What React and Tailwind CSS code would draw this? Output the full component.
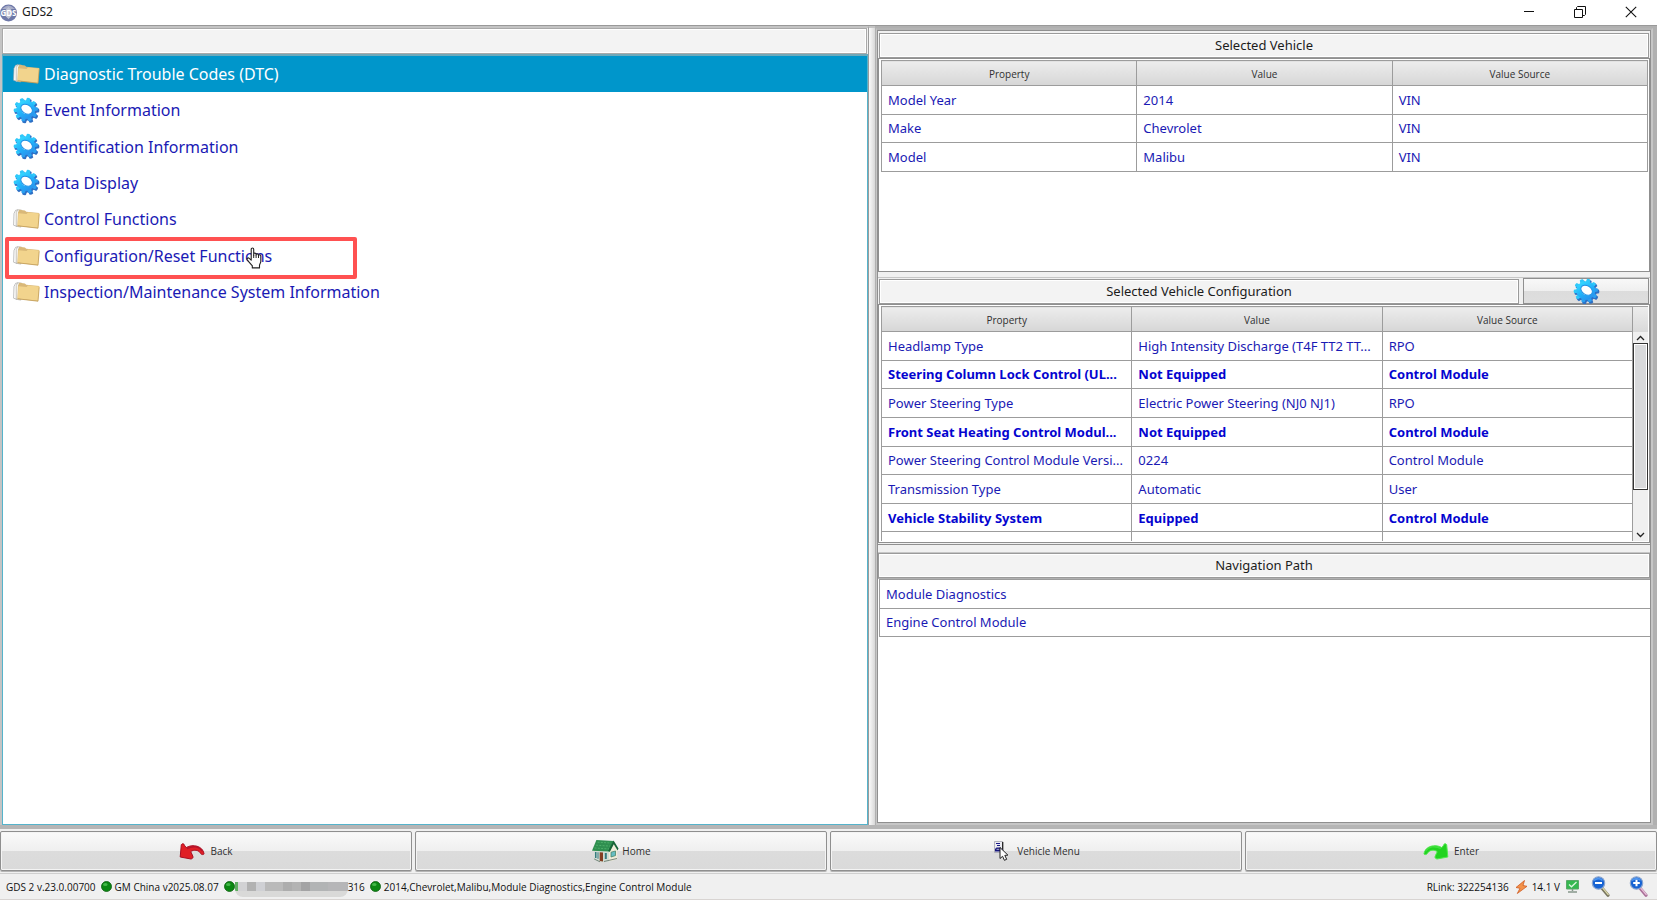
import React from "react";

const menuItems = [
  { label: "Diagnostic Trouble Codes (DTC)", icon: "folder", selected: true },
  { label: "Event Information", icon: "gear" },
  { label: "Identification Information", icon: "gear" },
  { label: "Data Display", icon: "gear" },
  { label: "Control Functions", icon: "folder" },
  { label: "Configuration/Reset Functions", icon: "folder", marked: true },
  { label: "Inspection/Maintenance System Information", icon: "folder" },
];

const vehicleRows = [
  ["Model Year", "2014", "VIN"],
  ["Make", "Chevrolet", "VIN"],
  ["Model", "Malibu", "VIN"],
];

const configRows = [
  ["Headlamp Type", "High Intensity Discharge (T4F TT2 TT...", "RPO"],
  ["Steering Column Lock Control (UL...", "Not Equipped", "Control Module", true],
  ["Power Steering Type", "Electric Power Steering (NJ0 NJ1)", "RPO"],
  ["Front Seat Heating Control Modul...", "Not Equipped", "Control Module", true],
  ["Power Steering Control Module Versi...", "0224", "Control Module"],
  ["Transmission Type", "Automatic", "User"],
  ["Vehicle Stability System", "Equipped", "Control Module", true],
  ["", "", ""],
];

const navigationPath = ["Module Diagnostics", "Engine Control Module"];

const toothAngles = [0, 36, 72, 108, 144, 180, 216, 252, 288, 324];

function Gear() {
  return (
    <svg viewBox="0 0 27 27" className="h-[27px] w-[27px] shrink-0" aria-hidden="true">
      <defs>
        <linearGradient id="gearFace" x1="0" y1="0" x2="1" y2="1">
          <stop offset="0" stopColor="#35d6ff" />
          <stop offset="0.55" stopColor="#20b0fa" />
          <stop offset="1" stopColor="#2a90ec" />
        </linearGradient>
      </defs>
      <g transform="translate(13.9 14.1) rotate(14) scale(0.96 0.94)" fill="#2d6fc4">
        {toothAngles.map((a) => (
          <path key={a} d="M-2.5 -8 L-2 -12.6 Q0 -13.5 2 -12.6 L2.5 -8Z" transform={`rotate(${a})`} />
        ))}
        <circle r="8" fill="none" stroke="#2d6fc4" strokeWidth="4" />
      </g>
      <g transform="translate(12.8 12.6) rotate(14) scale(0.96 0.94)" fill="url(#gearFace)">
        {toothAngles.map((a) => (
          <path key={a} d="M-2.3 -8 L-1.8 -12.3 Q0 -13.2 1.8 -12.3 L2.3 -8Z" fill={a > 180 || a < 60 ? "#2fc8fa" : "#2a9ff0"} transform={`rotate(${a})`} />
        ))}
        <circle r="7.2" fill="none" stroke="url(#gearFace)" strokeWidth="5.4" />
      </g>
      <ellipse cx="13.6" cy="12.2" rx="6.2" ry="4.4" transform="rotate(32 13.6 12.2)" fill="#fff" stroke="#1f8fe4" strokeWidth=".9" />
    </svg>
  );
}

function Folder() {
  return (
    <svg viewBox="0 0 27 20" className="h-[20px] w-[27px] shrink-0" aria-hidden="true">
      <path d="M1 4.5 2.6 1.3 5 .8 4 17.5.6 16.2Z" fill="#fff" stroke="#a8a8a8" strokeWidth=".7" />
      <path d="M3.2 3.6 4.6.8l4 .3-.8 17-4.6-.9Z" fill="#f7f7f5" stroke="#a39f94" strokeWidth=".6" />
      <path d="M5 3.4 6.3.7l5.6.7 1.4 1.4 13 1.2-.4 1.9L24.9 19.3 4.4 17Z" fill="#d9b878" />
      <path d="M5.4 4.2 13.6 5l1.3-1.5 11.4 1-1.2 14.2L4.7 16.6Z" fill="#f2d48d" />
      <path d="M4.6 16.8 25 19.2l1.2-14" fill="none" stroke="#c29c55" strokeWidth=".8" />
    </svg>
  );
}

function HandCursor() {
  return (
    <svg viewBox="0 0 17 22" className="h-[22px] w-[17px]" aria-hidden="true">
      <path
        d="M5.2 13.2V2.3c0-1.8 2.5-1.8 2.5 0v6 -1.1c0-1.4 2.4-1.4 2.4.1v1 -.4c0-1.4 2.4-1.3 2.4.1v1 -.3c0-1.3 2.3-1.2 2.3.3v5.5c0 1.5-1.3 2.6-1.3 4v2.4H6.3v-2.2C5 17.2 2.8 14.8 1.3 12.8c-.9-1.3.8-2.5 1.9-1.5Z"
        fill="#fff"
        stroke="#222"
        strokeWidth="1.1"
        strokeLinejoin="round"
      />
      <path d="M7.7 8v3M10.1 8.300v2.700M12.500 8.800v2.200" stroke="#222" strokeWidth="1" />
    </svg>
  );
}

function Arrow({ enter }) {
  const fill = enter ? "#22d321" : "#e01f26";
  const edge = enter ? "#53ea50" : "#a80f22";
  return (
    <svg viewBox="0 0 26 17" className="h-[17px] w-[26px] shrink-0" aria-hidden="true">
      <g transform={enter ? "translate(26 0) scale(-1 1)" : undefined}>
        <path
          d="M1.200 14 2.300 1.700C3 .300 5.200.500 5.400 2.200L7.200 4.600C14 .500 23.500 3.200 25 10.400c.2 1.500-2.400 1.600-3.300.2-1.700-3-4.600-4.200-8.900-2.700l-1 .9 2 4.300c.7 1.600-.3 2.600-1.800 2.900Z"
          fill={fill}
          stroke={edge}
          strokeWidth="1"
          strokeLinejoin="round"
        />
        <path d="M8 5.600C14 2.300 20.500 3.500 23.400 8" fill="none" stroke={enter ? "#41e03e" : "#b5132b"} strokeWidth="1.500" />
      </g>
    </svg>
  );
}

function House() {
  return (
    <svg viewBox="0 0 28 24" className="h-[24px] w-[28px] shrink-0" aria-hidden="true">
      <path d="M3.500 9 18 10.500v12L10 23.500 2.700 20.500Z" fill="#cfdcd4" />
      <path d="M18 11.500 23 4.500l3.300 6v9.700L18 22.500Z" fill="#eeecd8" />
      <path d="M5.400 1 22.600 2 18.800 12.600 1 11.700Z" fill="#2f8f50" />
      <path d="M22.600 1.600 27.500 9.600 26.600 11.500 22.800 5.200 18.900 12.800 17 12Z" fill="#176337" />
      <path d="M6.500 3.200 20 4M5 6.200l14 .9M3.500 9l14.500.9" stroke="#4dae69" strokeWidth="1" strokeDasharray="2 1.300" />
      <path d="M8.700 13.200 12 13.400V22.600L8.700 22Z" fill="#833d22" />
      <path d="M4 13h1.500v6H4ZM6.500 13.200h1v6.500h-1ZM13.800 14h2v6h-2Z" fill="#347b7f" />
      <path d="M20 13.200 24.500 12v4.600L20 18Z" fill="#65bec3" stroke="#3f7b5b" strokeWidth=".7" />
      <path d="M3.200 20 9 22.800M13 22.500l13-3" stroke="#77877c" strokeWidth="1" />
    </svg>
  );
}

function VehicleMenuIcon() {
  return (
    <svg viewBox="0 0 20 20" className="h-[20px] w-[20px] shrink-0" aria-hidden="true">
      <path d="M2.500.500h8v11h-8Z" fill="#ececf2" stroke="#a5a5ae" strokeWidth=".8" />
      <path d="M10.700 1v9.500" stroke="#222" strokeWidth="1.300" />
      <path d="M4 2.500h4M5 4.500h3" stroke="#191987" strokeWidth="1" />
      <path d="M3 9.500V8L4.500 6.500h4L9.500 8H11v2.500H3Z" fill="#17177d" />
      <path d="M4.500 8.300h3" stroke="#d6d6ee" strokeWidth=".8" />
      <path d="M8 6.500v11l2.600-2.200 1.800 4 2.300-1-1.900-3.900 3.100-.3Z" fill="#fff" stroke="#222" strokeWidth="1" />
    </svg>
  );
}

function Magnifier({ plus }) {
  return (
    <svg viewBox="0 0 20 21" className="h-[21px] w-[20px]" aria-hidden="true">
      <path d="m10.500 11.500 6.500 7.800" stroke={plus ? "#a96f97" : "#77745e"} strokeWidth="3.200" strokeLinecap="round" />
      <path d="m11.200 11.300 6 7.200" stroke={plus ? "#e6bfd8" : "#dbd7a8"} strokeWidth="1.300" strokeLinecap="round" />
      <circle cx="7.500" cy="7" r="6.200" fill="#1763d3" stroke="#8aa5cf" strokeWidth="1.200" />
      <path d="M3 4.500Q7 .9 11.500 4.300" fill="none" stroke="#4e96f0" strokeWidth="1.500" />
      <path d={plus ? "M4.200 7h6.600M7.500 3.700v6.600" : "M4 7h7"} stroke="#fff" strokeWidth="2" />
    </svg>
  );
}

function Dot() {
  return (
    <svg viewBox="0 0 11 11" className="h-[11px] w-[11px] shrink-0" aria-hidden="true">
      <circle cx="5.500" cy="5.500" r="5" fill="#0b8712" stroke="#0a5d0d" strokeWidth=".8" />
      <ellipse cx="4.300" cy="3.500" rx="2.300" ry="1.500" fill="#43b848" />
    </svg>
  );
}

function PanelHeader({ children, className = "" }) {
  return (
    <h2
      className={`flex h-[25px] items-center justify-center border border-[#9a9a9a] bg-[#f3f3f3] pb-px text-[13px] leading-[18px] font-normal text-[#1c1c1c] shadow-[inset_0_0_0_1px_#ffffff] ${className}`}
    >
      {children}
    </h2>
  );
}

function PropertyTable({ rows, label, className = "" }) {
  return (
    <table aria-label={label} className={`w-full table-fixed border-collapse ${className}`}>
      <thead>
        <tr className="h-[25px]">
          {["Property", "Value", "Value Source"].map((h) => (
            <th
              key={h}
              scope="col"
              className="border border-[#9c9c9c] bg-linear-to-b from-[#ededed] to-[#d6d6d6] p-0 pt-px font-['Open_Sans',sans-serif] text-[10px] leading-[14px] font-normal text-[#303030]"
            >
              {h}
            </th>
          ))}
        </tr>
      </thead>
      <tbody>
        {rows.map(([property, value, source, bold], i) => (
          <tr key={i} className={bold ? "font-bold text-[#0404cf]" : "text-[#1a1ab4]"}>
            {[property, value, source].map((cell, j) => (
              <td
                key={j}
                className="h-[28px] overflow-hidden border border-[#9c9c9c] bg-white py-0 pr-0 pl-[6px] text-[13px] leading-[18px] whitespace-nowrap"
              >
                {cell}
              </td>
            ))}
          </tr>
        ))}
      </tbody>
    </table>
  );
}

function ActionButton({ icon, children, gap = "gap-[5px]" }) {
  return (
    <button
      type="button"
      className={`flex h-[40px] flex-1 items-center justify-center rounded-[2px] border border-[#8f8f8f] bg-[linear-gradient(to_bottom,#fafafa_0%,#efefef_50%,#dcdcdc_51%,#dadada_100%)] font-['Open_Sans',sans-serif] text-[10px] leading-[16px] text-[#303030] shadow-[inset_0_0_0_1px_#f4f4f4,0_1px_0_#b5b5b5] ${gap}`}
    >
      {icon}
      {children}
    </button>
  );
}

export default function App() {
  return (
    <div className="flex min-h-screen flex-col bg-[#f0f0f0] font-['Noto_Sans','Open_Sans',sans-serif]">
      <header className="flex h-[25px] items-center bg-white">
        <svg viewBox="0 0 18 18" className="h-[18px] w-[18px] shrink-0" aria-hidden="true">
          <circle cx="8.500" cy="9" r="8.500" fill="#6e78a8" />
          <path d="M2 5Q8.500-2 15 5Z" fill="#a9aec8" />
          <path d="M8.500 3 11.500 6v6l-3 3-3-3V6Z" fill="#bfc3d3" />
          <text x="8.500" y="12.200" textAnchor="middle" fontSize="8" fontWeight="bold" fill="#fff">GDS</text>
        </svg>
        <h1 className="ml-1 pb-px text-[12px] leading-[16px] text-[#1c1c1c]">GDS2</h1>
        <div className="ml-auto flex items-center gap-[26px] pr-[14px] pb-[2px]">
          <button type="button" aria-label="Minimize" className="flex h-[22px] w-[25px] items-center justify-center">
            <svg viewBox="0 0 12 12" className="h-[12px] w-[12px]"><path d="M1 5.500h10" stroke="#111" /></svg>
          </button>
          <button type="button" aria-label="Restore" className="flex h-[22px] w-[25px] items-center justify-center">
            <svg viewBox="0 0 12 12" className="h-[12px] w-[12px]"><path d="M.5 3.500h8v8h-8ZM2.500 3V1.500L3.500.500h8v8l-1 1H9" fill="none" stroke="#111" /></svg>
          </button>
          <button type="button" aria-label="Close" className="flex h-[22px] w-[25px] items-center justify-center">
            <svg viewBox="0 0 12 12" className="h-[12px] w-[12px]"><path d="m.8.800 10.400 10.400M11.200.8.800 11.200" stroke="#111" strokeWidth="1.100" /></svg>
          </button>
        </div>
      </header>

      <main className="flex flex-1 border-t border-b-4 border-t-[#999999] border-b-[#b5b5b5]">
        <section className="flex flex-[866_1_0] flex-col border-t-2 border-l-2 border-[#c4c4c4]">
          <div className="mr-px h-[26px] border border-[#a9a9a9] bg-[#f3f3f3] shadow-[inset_0_0_0_1px_#ffffff]" />
          <div className="flex-1 border border-t-2 border-[#55b3cb] border-t-[#6fa9ba] bg-white">
            <ul className="grid h-[254px] grid-rows-7">
              {menuItems.map((item) => (
                <li key={item.label} className="relative flex">
                  <button
                    type="button"
                    className={`flex w-full items-center gap-[4px] pl-[10px] text-left text-[16px] leading-[24px] ${
                      item.selected ? "bg-[#0096cb] text-white" : "text-[#1a1ab4]"
                    }`}
                  >
                    {item.icon === "gear" ? <Gear /> : <Folder />}
                    {item.label}
                  </button>
                  {item.marked && (
                    <>
                      <span className="pointer-events-none absolute top-0 left-[2px] h-[42px] w-[352px] rounded-[2px] border-4 border-[#ff5151]" />
                      <span className="pointer-events-none absolute top-[10px] left-[243px]">
                        <HandCursor />
                      </span>
                    </>
                  )}
                </li>
              ))}
            </ul>
          </div>
        </section>

        <div className="w-[7px] border-t-2 border-l border-[#c4c4c4] border-l-[#9c9c9c] bg-linear-to-r from-[#fafafa] to-[#d8d8d8]" />

        <section className="flex flex-[777_1_0] border-t-2 border-r-4 border-l border-[#b0b0b0]">
          <div className="flex min-w-0 flex-1 border-2 border-l border-[#c6c6c6] border-t-[#b4b4b4]">
            <div className="flex min-w-0 flex-1 flex-col border border-[#8f8f8f] bg-[#f0f0f0]">
              <div className="px-px pt-[2px]">
                <PanelHeader>Selected Vehicle</PanelHeader>
              </div>
              <div className="h-[214px] border border-[#8f8f8f] bg-white pt-px pr-px pl-[2px]">
                <PropertyTable rows={vehicleRows} label="Selected Vehicle" className="h-[112px]" />
              </div>

              <div className="mt-[5px] flex items-end gap-[4px] border-t border-[#c6c6c6] px-px">
                <PanelHeader className="min-w-0 flex-1">Selected Vehicle Configuration</PanelHeader>
                <button
                  type="button"
                  aria-label="Edit vehicle configuration"
                  className="flex h-[26px] w-[126px] items-center justify-center border border-[#8f8f8f] bg-[linear-gradient(to_bottom,#f8f8f8_0%,#efefef_50%,#dcdcdc_51%,#dedede_100%)]"
                >
                  <Gear />
                </button>
              </div>
              <div className="flex h-[239px] border border-[#8f8f8f] bg-white pt-px pr-px pb-px pl-[2px]">
                <div className="min-w-0 flex-1 overflow-hidden">
                  <PropertyTable rows={configRows} label="Selected Vehicle Configuration" className="h-[255px]" />
                </div>
                <div className="flex w-[15px] flex-col bg-[#f0f0f0]">
                  <div className="h-[26px] border-t border-[#a3a3a3] bg-linear-to-b from-[#ededed] to-[#d9d9d9]" />
                  <button type="button" aria-label="Scroll up" className="flex h-[11px] items-center justify-center">
                    <svg viewBox="0 0 9 6" className="h-[6px] w-[9px]"><path d="m1 5 3.500-3.500L8 5" fill="none" stroke="#222" strokeWidth="1.300" /></svg>
                  </button>
                  <div className="h-[147px] border border-[#333333] bg-[#d8d9db] shadow-[inset_0_0_0_1px_#ffffff]" />
                  <button type="button" aria-label="Scroll down" className="mt-auto flex h-[12px] items-center justify-center">
                    <svg viewBox="0 0 9 6" className="h-[6px] w-[9px]"><path d="m1 1 3.500 3.500L8 1" fill="none" stroke="#222" strokeWidth="1.300" /></svg>
                  </button>
                </div>
              </div>

              <div className="mt-px flex min-h-0 flex-1 flex-col border-t border-[#8f8f8f] pt-[7px]">
                <div className="border-t border-[#c6c6c6]">
                  <PanelHeader>Navigation Path</PanelHeader>
                </div>
                <div className="flex-1 border-t border-[#b0b0b0] bg-white pl-px">
                  <ul className="grid h-[58px] grid-rows-2 border-t border-l border-[#9c9c9c]">
                    {navigationPath.map((step) => (
                      <li
                        key={step}
                        className="flex items-center border-b border-[#9c9c9c] px-[6px] text-[13px] leading-[18px] text-[#1a1ab4]"
                      >
                        {step}
                      </li>
                    ))}
                  </ul>
                </div>
              </div>
            </div>
          </div>
        </section>
      </main>

      <nav aria-label="Actions" className="flex gap-[3px] border-b border-[#cfcfcf] pt-[2px] pb-[2px]">
        <ActionButton icon={<Arrow />}>Back</ActionButton>
        <ActionButton icon={<House />} gap="gap-[3px]">Home</ActionButton>
        <ActionButton icon={<VehicleMenuIcon />}>Vehicle Menu</ActionButton>
        <ActionButton icon={<Arrow enter />}>Enter</ActionButton>
      </nav>

      <footer className="flex h-[26px] items-center justify-between border-b border-[#d8d4d2] pr-[8px] pl-[6px] font-['Open_Sans',sans-serif] text-[10px] leading-[16px] whitespace-nowrap text-[#111111]">
        <div className="flex items-center gap-[5px]">
          <span>GDS 2 v.23.0.00700</span>
          <span className="flex items-center gap-[3px]"><Dot />GM China v2025.08.07</span>
          <span className="flex items-center">
            <Dot />
            <span className="mt-[6px] flex h-[15px] w-[113px] items-start overflow-hidden rounded-b-[8px] bg-[#d9d9d8]" aria-hidden="true">
              <span className="h-[9px] w-[3px] bg-[#5fae62]" />
              <span className="h-[9px] w-[9px] bg-[#d2d2d4]" />
              <span className="h-[9px] w-[9px] bg-[#b2b2b2]" />
              <span className="h-[9px] w-[9px] bg-[#cfd0d4]" />
              <span className="h-[9px] w-[18px] bg-[#bababa]" />
              <span className="h-[9px] w-[9px] bg-[#adadad]" />
              <span className="h-[9px] w-[9px] bg-[#b3b3b3]" />
              <span className="h-[9px] w-[9px] bg-[#a3a3a4]" />
              <span className="h-[9px] w-[18px] bg-[#b2b4b5]" />
              <span className="h-[9px] flex-1 bg-[#b6b6b8]" />
            </span>
            <span>316</span>
          </span>
          <span className="flex items-center gap-[3px]"><Dot />2014,Chevrolet,Malibu,Module Diagnostics,Engine Control Module</span>
        </div>
        <div className="flex items-center">
          <span className="mr-[6px]">RLink: 322254136</span>
          <svg viewBox="0 0 13 14" className="mr-[4px] h-[14px] w-[13px]" aria-hidden="true">
            <path d="M9.500.5 1 7.500l4 .8-2.700 5.200L12 6.300 8 5.500Z" fill="#f3924a" stroke="#cf5a21" strokeWidth=".8" />
          </svg>
          <span className="mr-[6px]">14.1 V</span>
          <svg viewBox="0 0 13 13" className="mr-[12px] h-[13px] w-[13px]" aria-hidden="true">
            <path d="M.5.500h12v8.500H.5Z" fill="#35b850" stroke="#5aa868" />
            <path d="m3 4.500 2.500 2.300L10.500 2" fill="none" stroke="#dff6e0" strokeWidth="1.300" />
            <path d="M6.500 9v2M2 12h9" stroke="#86968a" strokeWidth="1.500" />
          </svg>
          <button type="button" aria-label="Zoom out" className="mr-[18px]"><Magnifier /></button>
          <button type="button" aria-label="Zoom in"><Magnifier plus /></button>
        </div>
      </footer>
    </div>
  );
}
